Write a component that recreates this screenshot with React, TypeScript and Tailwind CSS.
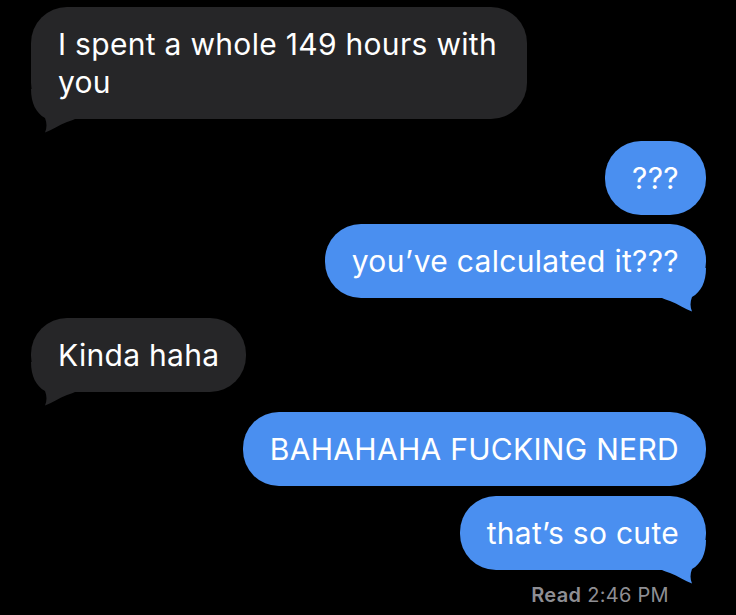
const font = { fontFamily: "Inter, 'Noto Sans', sans-serif" };

const Tail = ({ side, color }: { side: "left" | "right"; color: string }) => (
  <svg
    width="48"
    height="46"
    viewBox="0 0 48 46"
    className={
      side === "right"
        ? "pointer-events-none absolute -right-[4px] -bottom-[16px]"
        : "pointer-events-none absolute -left-[4px] -bottom-[16px] -scale-x-100"
    }
  >
    <path
      d="M0 0 H44 C44 14 39 24 30 29 C28 34 28 39 30 43.5 C23 41 16 36 8 33 C5 32 2 31 0 30 Z"
      fill={color}
    />
  </svg>
);

type MsgProps = {
  from: "me" | "them";
  tail?: boolean;
  className?: string;
  children: React.ReactNode;
};

const GREY = "#262628";
const BLUE = "#4a8ff0";

const Bubble = ({ from, tail, className = "", children }: MsgProps) => {
  const mine = from === "me";
  return (
    <div className={`flex ${mine ? "justify-end" : "justify-start"} ${className}`}>
      <div
        className={`relative rounded-[36px] px-[27px] py-[18px] text-[30px] leading-[38px] tracking-[0.3px] text-white whitespace-nowrap ${
          mine ? "bg-[#4a8ff0]" : "bg-[#262628]"
        }`}
      >
        {tail && <Tail side={mine ? "right" : "left"} color={mine ? BLUE : GREY} />}
        <span className="relative">{children}</span>
      </div>
    </div>
  );
};

export default function App() {
  return (
    <div className="h-[615px] w-[736px] overflow-hidden bg-black" style={font}>
      <div className="flex flex-col pt-[7px] pl-[31px] pr-[30px]">
        <Bubble from="them" tail>
          <span className="block w-[442px]">
            I spent a whole 149 hours with
            <br />
            you
          </span>
        </Bubble>
        <Bubble from="me" className="mt-[22px]">
          ???
        </Bubble>
        <Bubble from="me" tail className="mt-[9px]">
          you’ve calculated it???
        </Bubble>
        <Bubble from="them" tail className="mt-[20px]">
          Kinda haha
        </Bubble>
        <Bubble from="me" className="mt-[20px]">
          BAHAHAHA FUCKING NERD
        </Bubble>
        <Bubble from="me" tail className="mt-[10px]">
          that’s so cute
        </Bubble>
        <div className="mt-[13px] mr-[37px] text-right text-[20px] leading-[24px] tracking-[0.3px] text-[#8e8e93]">
          <span className="font-semibold">Read</span> 2:46 PM
        </div>
      </div>
    </div>
  );
}
